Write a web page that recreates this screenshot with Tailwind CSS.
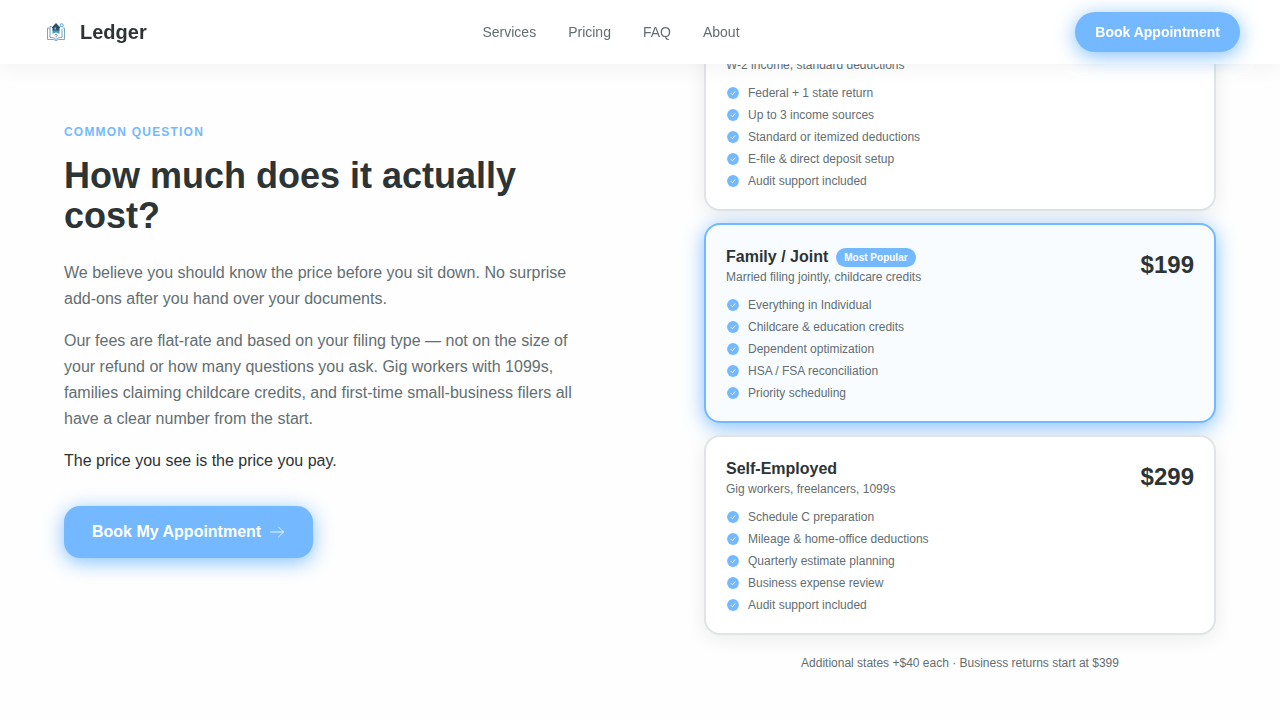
<!DOCTYPE html>
<html lang="en">
<head>
  <meta charset="UTF-8">
  <meta name="viewport" content="width=device-width, initial-scale=1.0">
  <title>Ledger - Pricing</title>
  <script src="https://cdn.jsdelivr.net/npm/@tailwindcss/browser@4"></script>
</head>
<body class="bg-[#fefefe] text-[#2d3436] min-h-screen font-['Liberation_Sans',Arial,sans-serif]">

  <!-- Shared icons -->
  <svg class="hidden" xmlns="http://www.w3.org/2000/svg">
    <symbol id="check" viewBox="0 0 256 256">
      <circle cx="128" cy="128" r="108" fill="#74b9ff" />
      <path d="M92 134l26 26 48-56" fill="none" stroke="#fff" stroke-width="15" stroke-linecap="round" stroke-linejoin="round" />
    </symbol>
  </svg>

  <!-- Header -->
  <header class="fixed top-0 inset-x-0 z-50 h-16 px-10 flex items-center justify-between bg-white shadow-[0_4px_20px_rgba(0,0,0,0.05)]">
    <a href="#" class="flex items-center gap-2 text-xl font-bold">
      <svg class="w-8 h-8" viewBox="0 0 32 32" fill="none" aria-hidden="true">
        <path d="M9.500 12H7.500v11.500h6.300c.8 0 1.200 1.200 2.200 1.200s1.400-1.200 2.200-1.200h6.300V12h-2" stroke="#7fa6bd" stroke-width="1" stroke-linejoin="round" />
        <path d="M16 23.500c-1.500-1.700-3.500-2-6-2V10.500c.8 0 1.300.1 1.800.3M16 23.500c1.500-1.700 3.500-2 6-2V13" stroke="#6aa5c4" stroke-width="1" stroke-linejoin="round" />
        <path d="M11.700 11.500L16 7l4.300 4.500-.8.800v2.700h-7v-2.700z" fill="#2b5266" />
        <path d="M12.500 14.500h7v3.300L16 16.500l-3.500 1.300z" fill="#4a9cbf" />
        <path d="M14.500 11.500H16v2h-1.500z" fill="#74b9ff" />
        <path d="M15 18.800c.7-.9 2.300-.6 2.100.5-.1.800-1.100.8-1.100 1.700" stroke="#54707e" stroke-width=".9" stroke-linecap="round" />
        <circle cx="21.700" cy="9.300" r="1.500" stroke="#6fabd0" stroke-width="1.100" />
      </svg>
      Ledger
    </a>
    <nav class="flex items-center gap-8 text-sm text-[#636e72]">
      <a href="#services" class="hover:text-[#2d3436]">Services</a>
      <a href="#pricing" class="hover:text-[#2d3436]">Pricing</a>
      <a href="#faq" class="hover:text-[#2d3436]">FAQ</a>
      <a href="#about" class="hover:text-[#2d3436]">About</a>
    </nav>
    <button type="button" class="bg-[#74b9ff] text-white text-sm font-bold px-5 py-2.5 rounded-full cursor-pointer shadow-[0_4px_20px_rgba(116,185,255,0.9)]">
      Book Appointment
    </button>
  </header>

  <!-- Pricing question -->
  <main id="pricing" class="max-w-6xl mx-auto pt-[11px] pb-12 grid grid-cols-2 gap-32 items-center">
    <section>
      <p class="text-xs font-bold tracking-widest uppercase text-[#74b9ff] mb-4">Common question</p>
      <h1 class="text-4xl font-bold mb-6">How much does it actually cost?</h1>
      <div class="space-y-4 leading-[26px] text-[#636e72]">
        <p>We believe you should know the price before you sit down. No surprise add-ons after you hand over your documents.</p>
        <p>Our fees are flat-rate and based on your filing type — not on the size of your refund or how many questions you ask. Gig workers with 1099s, families claiming childcare credits, and first-time small-business filers all have a clear number from the start.</p>
        <p class="text-[#2d3436]">The price you see is the price you pay.</p>
      </div>
      <button type="button" class="mt-8 flex items-center gap-2 bg-[#74b9ff] text-white font-bold px-7 py-3.5 rounded-2xl cursor-pointer shadow-[0_4px_20px_rgba(116,185,255,0.9)]">
        Book My Appointment
        <svg class="w-4 h-4" viewBox="0 0 256 256" fill="none" stroke="currentColor" stroke-width="13" stroke-linecap="round" stroke-linejoin="round" aria-hidden="true">
          <path d="M24 128h208M152 48l80 80-80 80" />
        </svg>
      </button>
    </section>

    <section class="flex flex-col gap-3">
      <!-- Individual -->
      <article class="bg-white border-2 border-[#dfe4e6] rounded-2xl p-5 shadow-[0_4px_20px_rgba(0,0,0,0.08)]">
        <div class="flex items-center justify-between">
          <div>
            <h2 class="font-bold">Individual</h2>
            <p class="text-xs text-[#636e72]">W-2 income, standard deductions</p>
          </div>
          <span class="text-2xl font-bold">$149</span>
        </div>
        <ul class="mt-3 space-y-1.5 text-xs text-[#636e72]">
          <li class="flex items-center gap-2"><svg class="w-3.5 h-3.5"><use href="#check" /></svg>Federal + 1 state return</li>
          <li class="flex items-center gap-2"><svg class="w-3.5 h-3.5"><use href="#check" /></svg>Up to 3 income sources</li>
          <li class="flex items-center gap-2"><svg class="w-3.5 h-3.5"><use href="#check" /></svg>Standard or itemized deductions</li>
          <li class="flex items-center gap-2"><svg class="w-3.5 h-3.5"><use href="#check" /></svg>E-file &amp; direct deposit setup</li>
          <li class="flex items-center gap-2"><svg class="w-3.5 h-3.5"><use href="#check" /></svg>Audit support included</li>
        </ul>
      </article>

      <!-- Family / Joint -->
      <article class="bg-[#f8fcff] border-2 border-[#74b9ff] rounded-2xl p-5 shadow-[0_4px_20px_rgba(116,185,255,0.9)]">
        <div class="flex items-center justify-between">
          <div>
            <div class="flex items-center gap-2">
              <h2 class="font-bold">Family / Joint</h2>
              <span class="bg-[#74b9ff] text-white text-[10px] leading-[15px] font-bold px-2 py-0.5 rounded-full">Most Popular</span>
            </div>
            <p class="text-xs text-[#636e72]">Married filing jointly, childcare credits</p>
          </div>
          <span class="text-2xl font-bold">$199</span>
        </div>
        <ul class="mt-3 space-y-1.5 text-xs text-[#636e72]">
          <li class="flex items-center gap-2"><svg class="w-3.5 h-3.5"><use href="#check" /></svg>Everything in Individual</li>
          <li class="flex items-center gap-2"><svg class="w-3.5 h-3.5"><use href="#check" /></svg>Childcare &amp; education credits</li>
          <li class="flex items-center gap-2"><svg class="w-3.5 h-3.5"><use href="#check" /></svg>Dependent optimization</li>
          <li class="flex items-center gap-2"><svg class="w-3.5 h-3.5"><use href="#check" /></svg>HSA / FSA reconciliation</li>
          <li class="flex items-center gap-2"><svg class="w-3.5 h-3.5"><use href="#check" /></svg>Priority scheduling</li>
        </ul>
      </article>

      <!-- Self-Employed -->
      <article class="bg-white border-2 border-[#dfe4e6] rounded-2xl p-5 shadow-[0_4px_20px_rgba(0,0,0,0.08)]">
        <div class="flex items-center justify-between">
          <div>
            <h2 class="font-bold">Self-Employed</h2>
            <p class="text-xs text-[#636e72]">Gig workers, freelancers, 1099s</p>
          </div>
          <span class="text-2xl font-bold">$299</span>
        </div>
        <ul class="mt-3 space-y-1.5 text-xs text-[#636e72]">
          <li class="flex items-center gap-2"><svg class="w-3.5 h-3.5"><use href="#check" /></svg>Schedule C preparation</li>
          <li class="flex items-center gap-2"><svg class="w-3.5 h-3.5"><use href="#check" /></svg>Mileage &amp; home-office deductions</li>
          <li class="flex items-center gap-2"><svg class="w-3.5 h-3.5"><use href="#check" /></svg>Quarterly estimate planning</li>
          <li class="flex items-center gap-2"><svg class="w-3.5 h-3.5"><use href="#check" /></svg>Business expense review</li>
          <li class="flex items-center gap-2"><svg class="w-3.5 h-3.5"><use href="#check" /></svg>Audit support included</li>
        </ul>
      </article>

      <p class="mt-2 text-center text-xs text-[#636e72]">Additional states +$40 each · Business returns start at $399</p>
    </section>
  </main>
</body>
</html>
